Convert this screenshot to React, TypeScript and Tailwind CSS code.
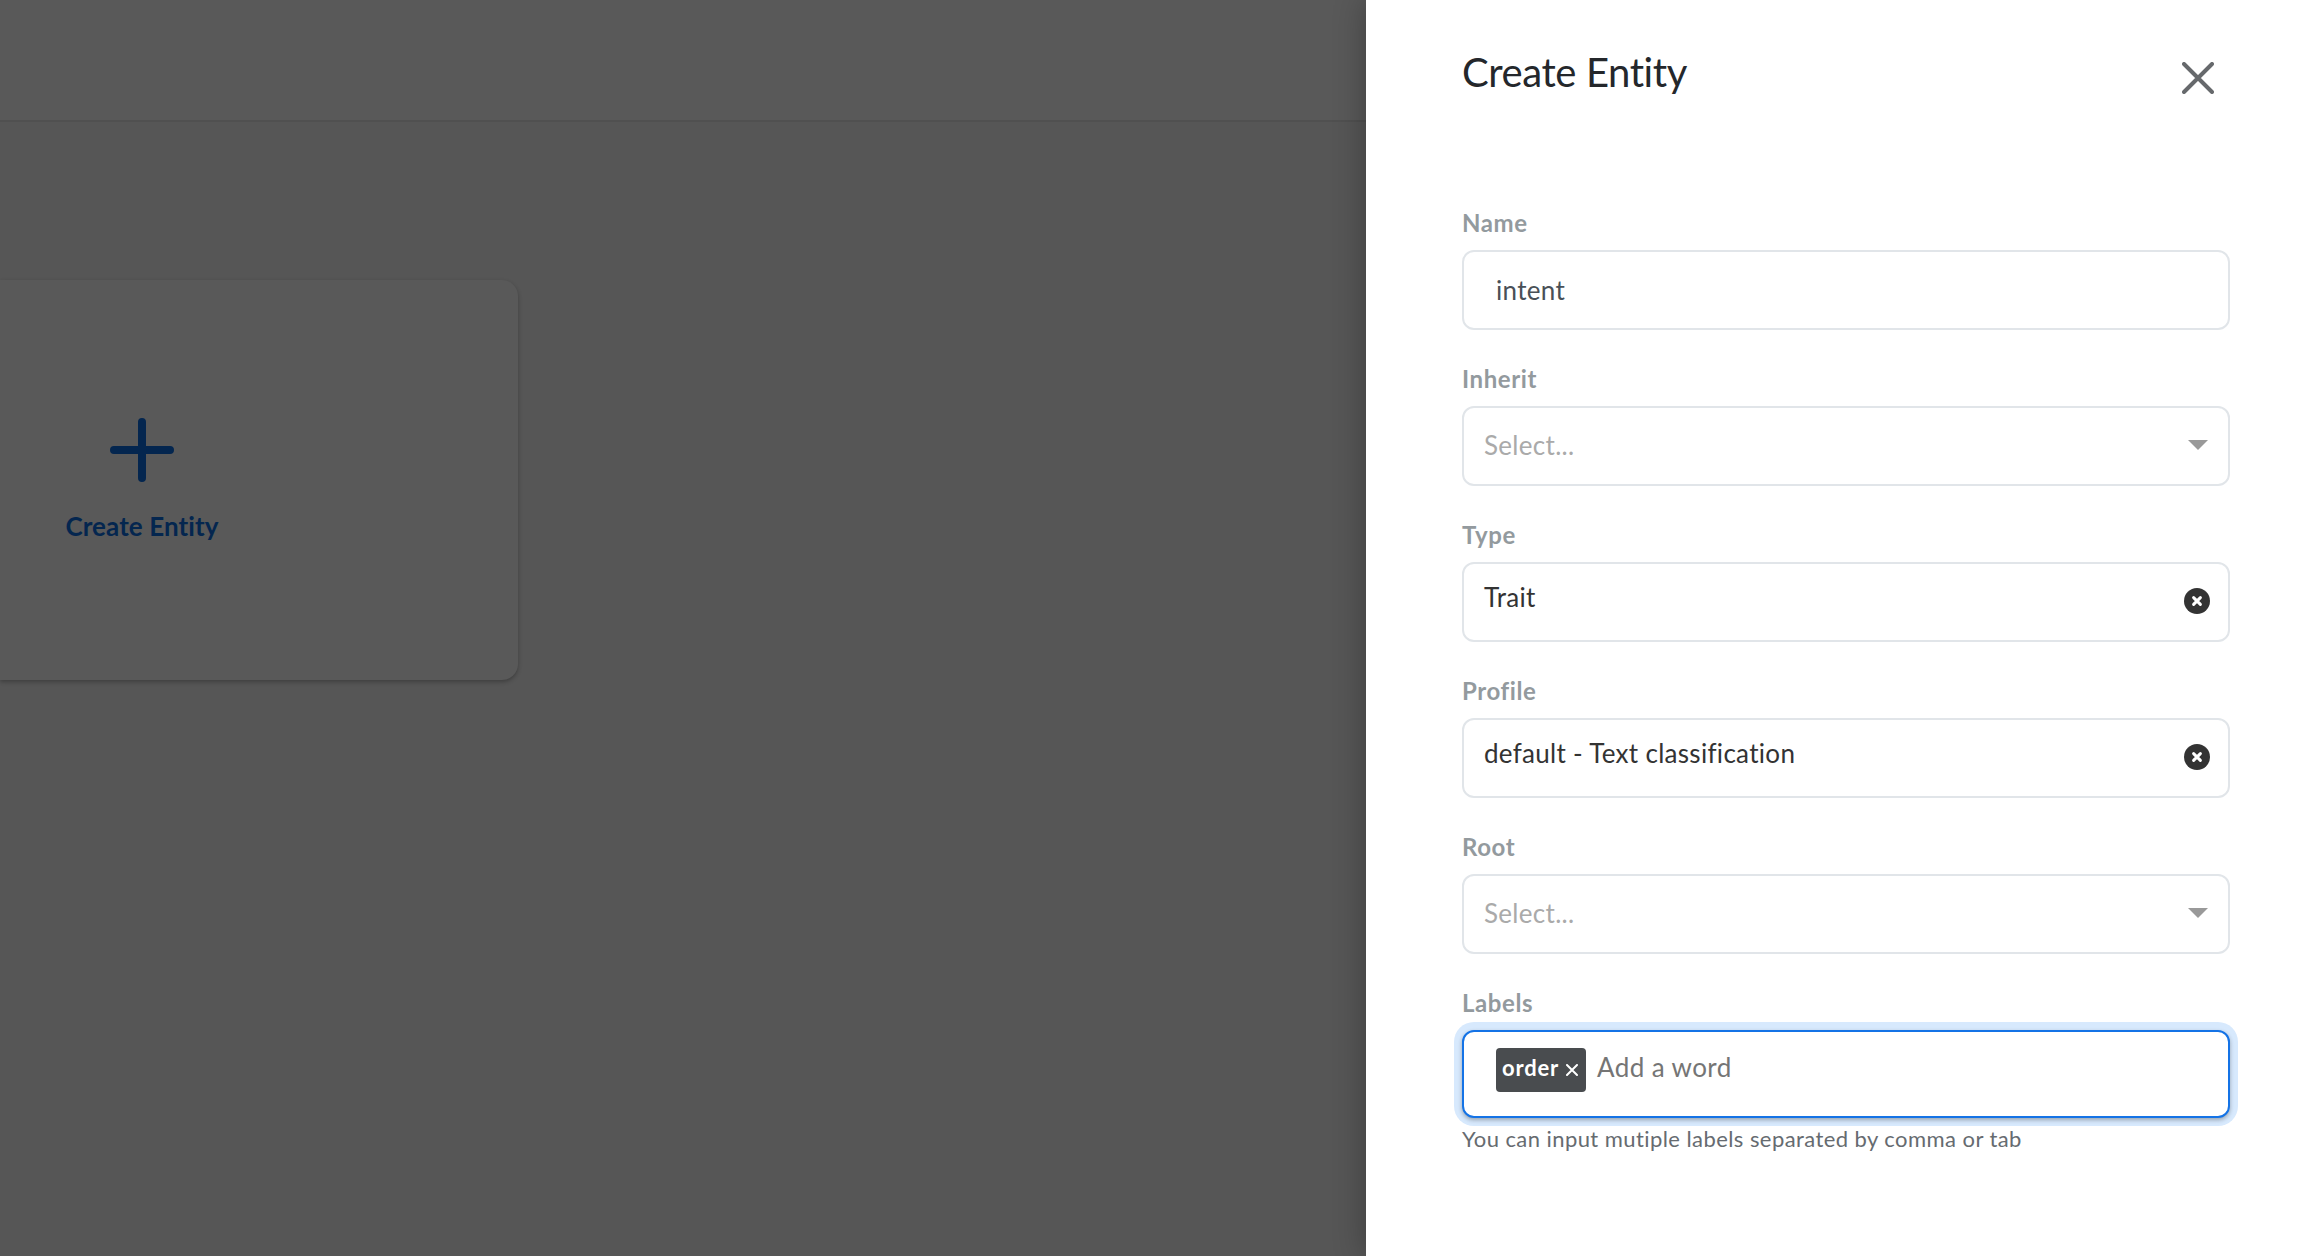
import { ReactNode } from "react";

function Field({ label, children }: { label: string; children: ReactNode }) {
  return (
    <div className="flex flex-col">
      <label className="mb-[11px] h-8 pt-px text-2xl leading-8 font-bold tracking-[0.6px] text-[#939a9e]">{label}</label>
      <div className="mt-px">{children}</div>
    </div>
  );
}

const box =
  "flex h-20 w-full rounded-xl border-2 border-[#e1e5e9] bg-white px-5 text-[26px] leading-8 tracking-[0.3px]";

function SelectBox({ value }: { value?: string }) {
  return value ? (
    <div className={`${box} justify-between`}>
      <span className="mt-[17px] text-[#333333]">{value}</span>
      <svg className="mt-6 -mr-[2px] size-[26px]" viewBox="0 0 26 26">
        <circle cx="13" cy="13" r="13" fill="#333333" />
        <path d="M9.6 9.6l6.8 6.8M16.4 9.6l-6.8 6.8" stroke="#fff" strokeWidth="3" strokeLinecap="round" />
      </svg>
    </div>
  ) : (
    <div className={`${box} justify-between`}>
      <span className="mt-[21px] text-[#aaaaaa]">Select...</span>
      <svg className="mt-8 h-[10px] w-5" viewBox="0 0 20 10">
        <path d="M0 0h20L10 10z" fill="#999999" />
      </svg>
    </div>
  );
}

export default function App() {
  return (
    <div className="flex h-[1256px] w-[2324px] overflow-hidden bg-[#565656] font-[Lato,sans-serif]">
      <main className="flex w-[1366px] flex-col">
        <header className="h-[122px] border-b-2 border-[#505050] bg-[#595959]" />
        <section className="mt-[158px] flex h-[400px] w-[518px] flex-col rounded-r-2xl bg-[#595959] pl-[66px] shadow-[0_2px_4px_rgba(0,0,0,0.28)]">
          <div className="mt-[138px] flex w-[152px] flex-col items-center">
            <svg className="h-16 w-16" viewBox="0 0 64 64">
              <path d="M4 32h56M32 4v56" stroke="#04264f" strokeWidth="8" strokeLinecap="round" />
            </svg>
            <span className="mt-7 text-[26px] leading-8 font-bold tracking-[0.1px] whitespace-nowrap text-[#04264f]">
              Create Entity
            </span>
          </div>
        </section>
      </main>

      <aside className="flex w-[958px] flex-col bg-white pr-[94px] pl-[96px] shadow-[0_0_30px_rgba(0,0,0,0.3)]">
        <div className="flex h-[206px] justify-between">
          <h1 className="mt-[48px] h-12 text-[40px] leading-12 tracking-[-0.4px] text-[#24272b]">Create Entity</h1>
          <svg className="mt-[62px] mr-4 size-8" viewBox="0 0 32 32">
            <path d="M2 2l28 28M30 2L2 30" stroke="#66696c" strokeWidth="4" strokeLinecap="round" />
          </svg>
        </div>

        <form className="flex flex-col gap-8">
          <Field label="Name">
            <div className={box}>
              <span className="mt-[22px] ml-3 text-[#495057]">intent</span>
            </div>
          </Field>
          <Field label="Inherit">
            <SelectBox />
          </Field>
          <Field label="Type">
            <SelectBox value="Trait" />
          </Field>
          <Field label="Profile">
            <SelectBox value="default - Text classification" />
          </Field>
          <Field label="Root">
            <SelectBox />
          </Field>
          <Field label="Labels">
            <div className="flex h-[88px] rounded-xl border-2 border-[#1473e6] bg-white pl-8 shadow-[0_2px_4px_rgba(0,0,0,0.3),0_0_0_8px_#d7e9fd]">
              <span className="mt-4 flex h-11 w-[90px] rounded-sm bg-[#494c4f] pl-1.5 text-[22px] leading-[40px] font-bold tracking-[0.8px] text-white">
                order
                <svg className="mt-[15.5px] ml-[6.5px] size-3" viewBox="0 0 12 12">
                  <path d="M1 1l10 10M11 1L1 11" stroke="#fff" strokeWidth="2" strokeLinecap="round" />
                </svg>
              </span>
              <span className="mt-[19px] ml-[11px] text-[26px] leading-8 tracking-[0.4px] text-[#757575]">Add a word</span>
            </div>
            <p className="mt-[5px] text-[22px] leading-8 tracking-[0.43px] text-[#666b70]">
              You can input mutiple labels separated by comma or tab
            </p>
          </Field>
        </form>
      </aside>
    </div>
  );
}
